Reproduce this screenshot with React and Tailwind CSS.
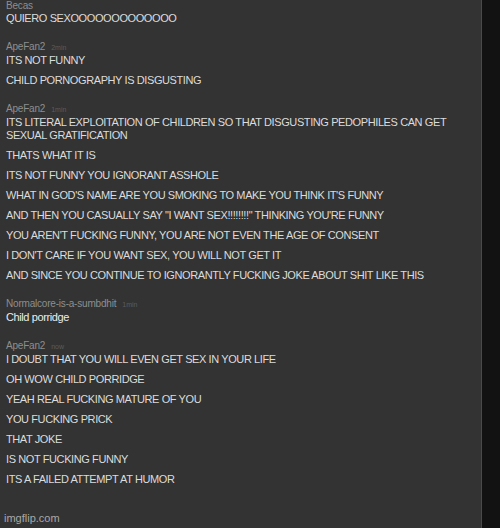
import React from "react";

const groups = [
  { user: "Becas", time: "", msgs: ["QUIERO SEXOOOOOOOOOOOOO"] },
  { user: "ApeFan2", time: "2min", msgs: ["ITS NOT FUNNY", "CHILD PORNOGRAPHY IS DISGUSTING"] },
  {
    user: "ApeFan2",
    time: "1min",
    msgs: [
      "ITS LITERAL EXPLOITATION OF CHILDREN SO THAT DISGUSTING PEDOPHILES CAN GET SEXUAL GRATIFICATION",
      "THATS WHAT IT IS",
      "ITS NOT FUNNY YOU IGNORANT ASSHOLE",
      "WHAT IN GOD'S NAME ARE YOU SMOKING TO MAKE YOU THINK IT'S FUNNY",
      'AND THEN YOU CASUALLY SAY "I WANT SEX!!!!!!!!" THINKING YOU\'RE FUNNY',
      "YOU AREN'T FUCKING FUNNY, YOU ARE NOT EVEN THE AGE OF CONSENT",
      "I DON'T CARE IF YOU WANT SEX, YOU WILL NOT GET IT",
      "AND SINCE YOU CONTINUE TO IGNORANTLY FUCKING JOKE ABOUT SHIT LIKE THIS",
    ],
  },
  { user: "Normalcore-is-a-sumbdhit", time: "1min", msgs: ["Child porridge"] },
  {
    user: "ApeFan2",
    time: "now",
    msgs: [
      "I DOUBT THAT YOU WILL EVEN GET SEX IN YOUR LIFE",
      "OH WOW CHILD PORRIDGE",
      "YEAH REAL FUCKING MATURE OF YOU",
      "YOU FUCKING PRICK",
      "THAT JOKE",
      "IS NOT FUCKING FUNNY",
      "ITS A FAILED ATTEMPT AT HUMOR",
    ],
  },
];

export default function App() {
  return (
    <div
      className="relative flex h-[528px] w-[500px] overflow-hidden bg-[#121212]"
      style={{ fontFamily: '"Liberation Sans", Arial, sans-serif' }}
    >
      <div className="w-[482px] shrink-0 border-r border-[#4a4a4a] bg-[#333333]">
        <div className="-mt-[1px] flex flex-col gap-[8px] pl-[6px] pr-[30px]">
          {groups.map((g, i) => (
            <div key={i} className="flex flex-col">
              <div className="flex items-baseline gap-[6px] leading-[13px]">
                <span className="text-[10px] tracking-[-0.2px] text-[#8e8e8e]">{g.user}</span>
                {g.time && <span className="text-[7px] text-[#5c5c5c]">{g.time}</span>}
              </div>
              {g.msgs.map((m, j) => (
                <div
                  key={j}
                  className={`mb-[7px] text-[11px] leading-[13px] tracking-[-0.4px] ${
                    g.user.startsWith("Normal") ? "text-[#ececec]" : "text-[#dcdcdc]"
                  }`}
                >
                  {m}
                </div>
              ))}
            </div>
          ))}
        </div>
      </div>
      <div className="flex-1" />
      <div className="absolute bottom-[2px] left-[4px] text-[11px] text-[#a8a8a8]">imgflip.com</div>
    </div>
  );
}
